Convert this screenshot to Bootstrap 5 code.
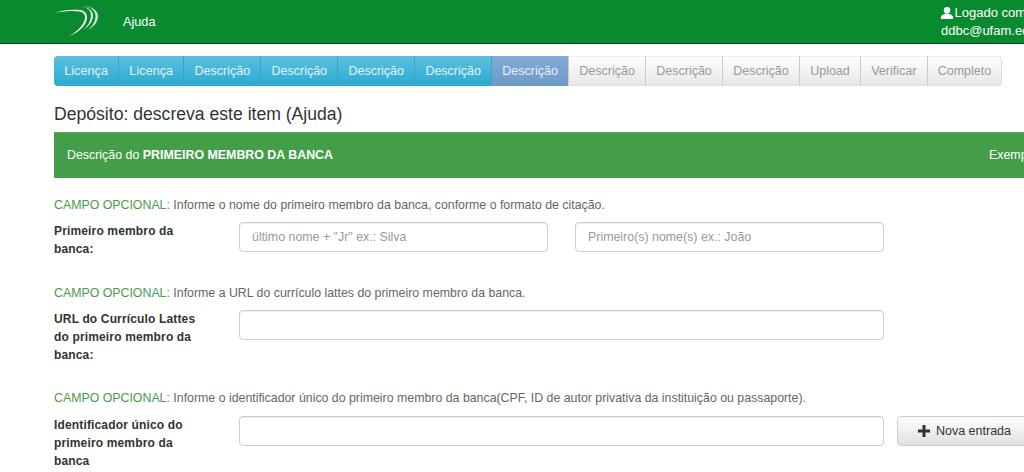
<!DOCTYPE html>
<html lang="pt">
<head>
  <meta charset="UTF-8" />
  <meta name="viewport" content="width=device-width, initial-scale=1.0"/>
  <title>Depósito | Descrição</title>
  <link href="https://cdn.jsdelivr.net/npm/bootstrap@5.3.3/dist/css/bootstrap.min.css" rel="stylesheet" />
  <style>
    html, body {
      height: 472px;
      overflow: hidden;
    }
    body {
      font-family: "Liberation Sans", Arial, sans-serif;
      font-size: 13px;
      color: #333;
      background-color: #fff;
    }
    .top-bar {
      height: 44px;
      width: 1100px;
      background-color: #0a8a2e;
      border-bottom: 1px solid #05401a;
      color: #fff;
      padding: 0 0 0 54px;
    }
    .top-wrap {
      width: 1024px;
      overflow: hidden;
    }
    .logo-box {
      width: 69px;
    }
    .help-text {
      font-size: 12.700px;
      padding-top: 2px;
    }
    .user-box {
      margin-left: auto;
      width: 159px;
      line-height: 18px;
      font-size: 13px;
      padding-top: 4px;
      white-space: nowrap;
    }
    .user-icon {
      margin-right: -2px;
    }
    .page-main {
      width: 1100px;
      padding-left: 54px;
    }
    .step-bar {
      margin-top: 12px;
      width: 948px;
      height: 30px;
    }
    .step-item {
      height: 30px;
      padding: 0 10.200px;
      line-height: 31px;
      font-size: 12.500px;
      white-space: nowrap;
      border: 0;
      border-right: 1px solid #ccc;
      color: #999;
      background: linear-gradient(to bottom, #fff, #e6e6e6);
      box-shadow: inset 0 -1px 0 #ddd, inset 0 1px 0 #eee;
    }
    .step-item.step-short {
      letter-spacing: .1px;
    }
    .step-item.step-done {
      color: #e4f4fa;
      background: linear-gradient(to bottom, #5bc0de, #2aabd2);
      border-right: 1px solid #3ba3c6;
      box-shadow: none;
    }
    .step-item.step-now {
      color: #e8eff7;
      background: linear-gradient(to bottom, #83aad9, #6d9bc5);
      border-right: 1px solid #ccc;
      box-shadow: none;
    }
    .step-item:first-child {
      border-radius: 4px 0 0 4px;
    }
    .step-item:last-child {
      flex-grow: 1;
      border-radius: 0 4px 4px 0;
      border-right: 1px solid #ddd;
    }
    .page-title {
      font-size: 17.600px;
      font-weight: 400;
      line-height: 20px;
      margin: 18px 0 8px;
      color: #333;
    }
    .help-band {
      height: 46px;
      padding: 0 0 0 13px;
      background-color: #449d48;
      color: #fff;
      font-size: 12.400px;
      border-top: 1px solid #5cab5f;
    }
    .help-band .band-example {
      margin-left: auto;
      width: 111px;
    }
    .field-hint {
      color: #666;
      font-size: 12.350px;
      line-height: 16px;
    }
    .field-hint.first-hint {
      margin-top: 19px;
    }
    .field-hint.second-hint {
      margin-top: 27px;
    }
    .field-hint.third-hint {
      margin-top: 26px;
    }
    .hint-tag {
      color: #4a9a4d;
    }
    .field-row {
      margin-top: 9px;
    }
    .field-row.last-row {
      margin-top: 10px;
    }
    .field-label {
      width: 185px;
      flex: none;
      padding-right: 29px;
      margin-bottom: 0;
      font-weight: 700;
      font-size: 12px;
      line-height: 18px;
      color: #333;
      letter-spacing: .15px;
    }
    .field-input {
      height: 30px;
      width: 309px;
      flex: none;
      font-size: 12.400px;
      color: #555;
      border-color: #ccc;
      border-radius: 4px;
      padding: 4px 12px;
      box-shadow: inset 0 1px 1px rgba(0, 0, 0, .075);
    }
    .field-input::placeholder {
      color: #999;
    }
    .field-input.field-wide {
      width: 645px;
    }
    .field-input.field-second {
      margin-left: 27px;
    }
    .add-btn {
      height: 30px;
      width: 135px;
      margin-left: 13px;
      flex: none;
      font-size: 12.500px;
      color: #333;
      padding: 0;
      gap: 6px;
      border: 1px solid #ccc;
      border-radius: 4px;
      background: linear-gradient(to bottom, #fff, #e0e0e0);
    }
  </style>
</head>
<body>

  <div class="top-wrap">
    <nav class="top-bar d-flex align-items-center">
      <div class="logo-box d-flex">
        <svg width="46" height="36" viewBox="0 0 46 36" fill="#fff">
          <path d="M1 8.700C10 7 20 6.500 26 7.500C30 8.500 31.500 11 31 14.500C30 21 22 29 14 32.700C24 29 33 21 33 13.500C33 9 30 6.500 26 6C18 5 8 6.500 1 8.700Z"/>
          <path d="M27.700 2.700C34 3.500 37.500 7 37 12C36.500 18 33 23 29 26C34 23 39 18 39 11.500C39 6.500 34 3 27.700 2.700Z" opacity=".9"/>
          <path d="M31 2C38 3.500 42 7.500 41.500 13C41 18 38 23 33.700 26C39.500 23 44 18 44 12C44 7 38.500 3 31 2Z" opacity=".85"/>
        </svg>
      </div>
      <span class="help-text">Ajuda</span>
      <div class="user-box align-self-start">
        <svg width="12" height="14" viewBox="0 0 13 14" fill="#fff" class="user-icon align-text-bottom">
          <circle cx="6.500" cy="4" r="3.500"/>
          <path d="M0 13.500V11C0 9.300 3.500 8.500 5 7.500H8C9.500 8.500 13 9.300 13 11V13.500Z"/>
        </svg>
        Logado como:<br>ddbc@ufam.edu.br
      </div>
    </nav>
  </div>

  <main class="page-main">
    <div class="step-bar d-flex">
      <div class="step-item step-done step-short">Licença</div>
      <div class="step-item step-done step-short">Licença</div>
      <div class="step-item step-done">Descrição</div>
      <div class="step-item step-done">Descrição</div>
      <div class="step-item step-done">Descrição</div>
      <div class="step-item step-done">Descrição</div>
      <div class="step-item step-now">Descrição</div>
      <div class="step-item">Descrição</div>
      <div class="step-item">Descrição</div>
      <div class="step-item">Descrição</div>
      <div class="step-item">Upload</div>
      <div class="step-item">Verificar</div>
      <div class="step-item">Completo</div>
    </div>

    <h1 class="page-title">Depósito: descreva este item (Ajuda)</h1>

    <div class="help-band d-flex align-items-center">
      <span>Descrição do <b>PRIMEIRO MEMBRO DA BANCA</b></span>
      <span class="band-example">Exemplo</span>
    </div>

    <div class="field-hint first-hint"><span class="hint-tag">CAMPO OPCIONAL:</span> Informe o nome do primeiro membro da banca, conforme o formato de citação.</div>
    <div class="field-row d-flex">
      <label class="field-label">Primeiro membro da banca:</label>
      <input class="form-control field-input" type="text" placeholder="último nome + &quot;Jr&quot; ex.: Silva">
      <input class="form-control field-input field-second" type="text" placeholder="Primeiro(s) nome(s) ex.: João">
    </div>

    <div class="field-hint second-hint"><span class="hint-tag">CAMPO OPCIONAL:</span> Informe a URL do currículo lattes do primeiro membro da banca.</div>
    <div class="field-row d-flex">
      <label class="field-label">URL do Currículo Lattes do primeiro membro da banca:</label>
      <input class="form-control field-input field-wide" type="text">
    </div>

    <div class="field-hint third-hint"><span class="hint-tag">CAMPO OPCIONAL:</span> Informe o identificador único do primeiro membro da banca(CPF, ID de autor privativa da instituição ou passaporte).</div>
    <div class="field-row last-row d-flex">
      <label class="field-label">Identificador único do primeiro membro da banca</label>
      <input class="form-control field-input field-wide" type="text">
      <button class="add-btn d-flex align-items-center justify-content-center" type="button">
        <svg width="12" height="12" viewBox="0 0 12 12" fill="#333">
          <path d="M4.500 0H7.500V4.500H12V7.500H7.500V12H4.500V7.500H0V4.500H4.500Z"/>
        </svg>
        Nova entrada
      </button>
    </div>
  </main>

  <script src="https://cdn.jsdelivr.net/npm/bootstrap@5.3.3/dist/js/bootstrap.bundle.min.js"></script>
</body>
</html>
